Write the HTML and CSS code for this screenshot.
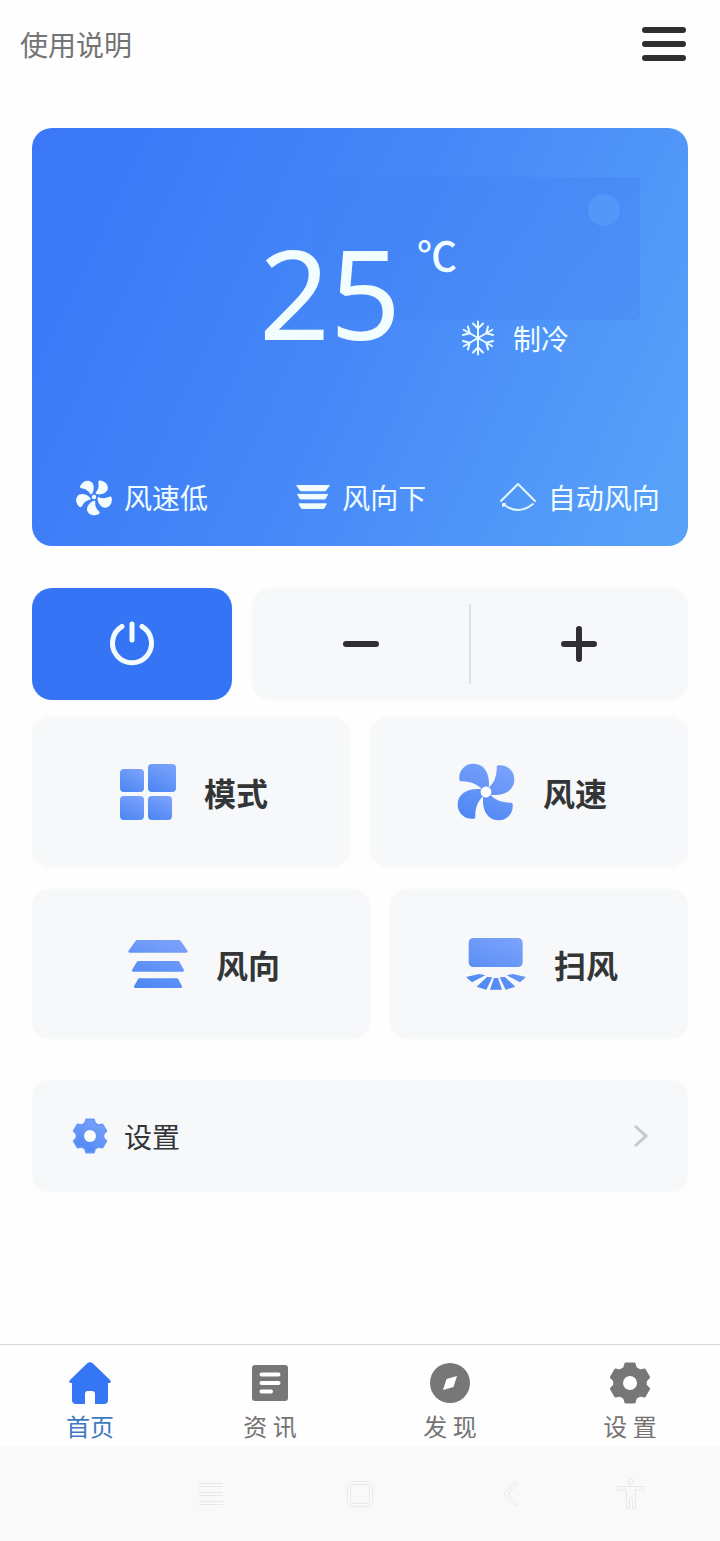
FILE: index.html
```html
<!DOCTYPE html>
<html lang="zh-CN">
<head>
<meta charset="utf-8">
<meta name="viewport" content="width=device-width, initial-scale=1">
<title>空调遥控器</title>
<link rel="stylesheet" href="styles.css">
</head>
<body>
<svg class="defs" width="0" height="0" aria-hidden="true">
  <defs>
    <linearGradient id="blue" x1="0.8" y1="0" x2="0.3" y2="1">
      <stop offset="0" stop-color="#7ba2fb"/>
      <stop offset="1" stop-color="#4f88f4"/>
    </linearGradient>
    <path id="gear" d="M-6-14.800-4.500-19.500 4.500-19.500 6-14.800 9.900-12.600 14.600-13.600 19.100-5.800 15.800-2.200 15.800 2.200 19.100 5.800 14.600 13.600 9.900 12.600 6 14.800 4.500 19.500-4.500 19.500-6 14.800-9.900 12.600-14.600 13.600-19.100 5.800-15.800 2.200-15.800-2.200-19.100-5.800-14.600-13.600-9.900-12.600Z" stroke-width="2" stroke-linejoin="round"/>
    <path id="blade5" d="M-1 12C-13 17-23 28-22 42C-20 50-14 56-4 58C6 58 16 56 18 50C18 46 14 44 11 40C5 33 3 24 4 13Z"/>
    <path id="arm" d="M0 0V-16.500M-5-14.500 0-9.500 5-14.500"/>
  </defs>
</svg>

<header class="topbar">
  <a class="topbar-link" href="#help">使用说明</a>
  <button class="icon-button" type="button" aria-label="菜单">
    <svg width="44" height="34" viewBox="0 0 44 34"><path d="M3 3H41M3 17H41M3 31H41" stroke="#2e2d2f" stroke-width="6" stroke-linecap="round"/></svg>
  </button>
</header>

<main class="content">
  <section class="status">
    <div class="unit-art"><span class="unit-lamp"></span></div>
    <div class="reading">
      <div class="temperature"><span class="degrees">25</span><span class="unit">℃</span></div>
      <div class="mode">
        <svg width="34" height="36" viewBox="-17 -18 34 36" fill="none" stroke="#e9fbff" stroke-width="2" stroke-linecap="round">
          <use href="#arm"/><use href="#arm" transform="rotate(60)"/><use href="#arm" transform="rotate(120)"/><use href="#arm" transform="rotate(180)"/><use href="#arm" transform="rotate(240)"/><use href="#arm" transform="rotate(300)"/>
        </svg>
        <span>制冷</span>
      </div>
    </div>
    <ul class="facts">
      <li>
        <svg width="36" height="38" viewBox="-57 -60 114 120" fill="#f3fdff">
          <use href="#blade5"/><use href="#blade5" transform="rotate(72)"/><use href="#blade5" transform="rotate(144)"/><use href="#blade5" transform="rotate(216)"/><use href="#blade5" transform="rotate(288)"/><circle r="7"/>
        </svg>
        <span>风速低</span>
      </li>
      <li>
        <svg width="34" height="26" viewBox="0 0 104 78" fill="#f3fdff" stroke="#f3fdff" stroke-width="3" stroke-linejoin="round"><path d="M2 4H102L90 20H14ZM5 31H97L89 45H13ZM9 60H93L85 74H17Z"/></svg>
        <span>风向下</span>
      </li>
      <li>
        <svg width="36" height="30" viewBox="0 0 36 30" fill="none" stroke="#e2f8ff" stroke-width="2" stroke-linecap="round" stroke-linejoin="round"><path d="M1 19 18 2 35 19"/><path d="M3 22Q18 34 33 22M3 24V22H5"/></svg>
        <span>自动风向</span>
      </li>
    </ul>
  </section>

  <div class="row row-power">
    <button class="power" type="button" aria-label="电源">
      <svg width="46" height="46" viewBox="0 0 46 46" fill="none" stroke="#f3fcff" stroke-width="5" stroke-linecap="round"><path d="M13 5.500A19.500 19.500 0 1 0 33 5.500M23 3V19"/></svg>
    </button>
    <div class="stepper">
      <button type="button" aria-label="降低温度"><svg width="36" height="36" viewBox="0 0 36 36"><path d="M3 18H33" stroke="#2f2f31" stroke-width="6" stroke-linecap="round"/></svg></button>
      <button type="button" aria-label="升高温度"><svg width="36" height="36" viewBox="0 0 36 36"><path d="M3 18H33M18 3V33" stroke="#2f2f31" stroke-width="6" stroke-linecap="round"/></svg></button>
    </div>
  </div>

  <div class="row row-even">
    <button class="tile" type="button">
      <svg width="56" height="56" viewBox="0 0 56 56" fill="url(#blue)"><rect x="0" y="5" width="24" height="23" rx="4"/><rect x="28" y="0" width="28" height="28" rx="4"/><rect x="0" y="32" width="24" height="24" rx="4"/><rect x="28" y="32" width="24" height="24" rx="4"/></svg>
      <span>模式</span>
    </button>
    <button class="tile" type="button">
      <svg width="58" height="58" viewBox="-86 -86 172 172" fill="url(#blue)">
        <path d="M-14-10C-30-26-48-32-76-32Q-79-33-79-37C-82-62-64-84-38-84C-2-84 13-50 8-12L0 0ZM10-14C26-30 32-48 32-76Q33-79 37-79C62-82 84-64 84-38C84-2 50 13 12 8L0 0ZM14 10C30 26 48 32 76 32Q79 33 79 37C82 62 64 84 38 84C2 84-13 50-8 12L0 0ZM-10 14C-26 30-32 48-32 76Q-33 79-37 79C-62 82-84 64-84 38C-84 2-50-13-12-8L0 0Z"/><circle r="16" fill="#fdffff"/>
      </svg>
      <span>风速</span>
    </button>
  </div>

  <div class="row row-wide">
    <button class="tile" type="button">
      <svg width="60" height="50" viewBox="0 0 180 150" fill="url(#blue)"><path d="M28 3H152Q156 3 159 7L179 36Q180 41 175 41H5Q0 41 1 36L22 7Q24 3 28 3ZM32 66H149Q153 66 155 70L168 93Q169 98 164 98H16Q11 98 12 93L26 70Q28 66 32 66ZM34 118H146Q150 118 152 122L162 142Q163 147 158 147H22Q17 147 18 142L29 122Q31 118 34 118Z"/></svg>
      <span>风向</span>
    </button>
    <button class="tile" type="button">
      <svg width="60" height="52" viewBox="0 0 180 156" fill="url(#blue)"><path d="M24 0H154Q170 0 170 16V71Q170 87 154 87H24Q8 87 8 71V16Q8 0 24 0ZM0 117 40 108 58 112 18 133ZM32 146 63 117 79 118 61 155ZM72 155 84 120H96L108 155ZM180 117 140 108 122 112 162 133ZM148 146 117 117 101 118 119 155Z"/></svg>
      <span>扫风</span>
    </button>
  </div>

  <a class="settings" href="#settings">
    <svg width="36" height="38" viewBox="-21 -21 42 42"><use href="#gear" fill="url(#blue)" stroke="#6797f7"/><circle r="7" fill="#fbfdff"/></svg>
    <span>设置</span>
    <svg class="chevron" width="14" height="24" viewBox="0 0 14 24" fill="none" stroke="#c6c8ca" stroke-width="3"><path d="M1 2 12 12 1 22"/></svg>
  </a>
</main>

<nav class="tabs">
  <a class="tab tab-active" href="#home">
    <svg width="42" height="42" viewBox="0 0 42 42" fill="#3576f5"><path d="M18 1.500Q21-1 24 1.500L41 18Q43 21 40 21H39V38Q39 42 35 42H26V32Q26 29 23 29H19Q16 29 16 32V42H7Q3 42 3 38V21H2Q-1 21 1 18Z"/></svg>
    <span>首页</span>
  </a>
  <a class="tab" href="#news">
    <svg width="42" height="42" viewBox="0 0 42 42"><rect x="3" y="3" width="36" height="36" rx="3" fill="#777"/><path d="M12.500 12.500H29.500M12.500 21H29.500M12.500 29.500H22" stroke="#fff" stroke-width="4" stroke-linecap="round"/></svg>
    <span>资 讯</span>
  </a>
  <a class="tab" href="#discover">
    <svg width="42" height="42" viewBox="0 0 42 42"><circle cx="21" cy="21" r="20" fill="#777"/><path d="M28 14 24.500 25 14 28 17.500 17Z" fill="#fff"/></svg>
    <span>发 现</span>
  </a>
  <a class="tab" href="#me">
    <svg width="42" height="42" viewBox="-21 -21 42 42"><use href="#gear" fill="#777" stroke="#777"/><circle r="7" fill="#fff"/></svg>
    <span>设 置</span>
  </a>
</nav>

<footer class="system">
  <button class="icon-button" type="button" aria-label="最近任务"><svg width="24" height="26" viewBox="0 0 24 26"><path d="M0 2.500H24M0 5.500H24M0 11.500H24M0 14.500H24M0 20.500H24M0 23.500H24"/></svg></button>
  <button class="icon-button" type="button" aria-label="主屏幕"><svg width="26" height="26" viewBox="0 0 26 26"><rect x="0.500" y="0.500" width="25" height="25" rx="6"/><rect x="3.500" y="3.500" width="19" height="19" rx="4"/></svg></button>
  <button class="icon-button" type="button" aria-label="返回"><svg width="16" height="26" viewBox="0 0 16 26"><path d="M12 1 1 13 12 25 14 23 5 13 14 3Z"/></svg></button>
  <button class="icon-button" type="button" aria-label="无障碍"><svg width="28" height="32" viewBox="0 0 28 32"><circle cx="14" cy="4" r="2.500"/><path d="M1 8.500H27V12H18.500V30H15.500V20H12.500V30H9.500V12H1Z"/></svg></button>
</footer>
</body>
</html>
```

FILE: styles.css
```css
* {
  box-sizing: border-box;
}

body {
  margin: 0;
  min-height: 100vh;
  display: flex;
  flex-direction: column;
  background: #fefefe;
  color: #343537;
  font-family: "Noto Sans CJK SC", sans-serif;
  font-size: 28px;
  line-height: 40px;
}

a {
  color: inherit;
  text-decoration: none;
}

button {
  margin: 0;
  padding: 0;
  border: 0;
  background: none;
  color: inherit;
  font: inherit;
  cursor: pointer;
}

svg {
  display: block;
  flex: none;
}

.defs {
  position: absolute;
}

.topbar {
  display: flex;
  align-items: center;
  justify-content: space-between;
  padding: 24px 34px 24px 20px;
}

.topbar-link {
  color: #747474;
}

.content {
  flex: 1;
  padding: 40px 32px;
}

.status {
  position: relative;
  display: flex;
  flex-direction: column;
  justify-content: space-between;
  min-height: 418px;
  padding: 88px 0 29px;
  border-radius: 20px;
  background: linear-gradient(115deg, #3a78f7 8%, #4688f8 50%, #58a1f9 95%);
  color: #f1fdff;
}

.unit-art {
  position: absolute;
  top: 49px;
  right: 48px;
  width: 50%;
  height: 143px;
  border-radius: 4px;
  background: linear-gradient(90deg, rgba(60, 120, 240, 0.1), rgba(60, 120, 240, 0.3));
}

.unit-lamp {
  position: absolute;
  top: 17px;
  right: 20px;
  width: 32px;
  height: 32px;
  border-radius: 50%;
  background: #5397f9;
}

.reading {
  position: relative;
  display: grid;
  grid-template-columns: 1fr auto 1fr;
}

.temperature {
  grid-column: 2;
  display: flex;
  gap: 16px;
  padding-right: 4px;
}

.degrees {
  font-family: "Noto Sans", sans-serif;
  font-size: 124px;
  line-height: 152px;
}

.unit {
  padding-top: 18px;
  font-size: 40px;
  font-weight: 500;
}

.mode {
  display: flex;
  align-items: center;
  align-self: end;
  gap: 18px;
  padding-bottom: 10px;
}

.facts {
  position: relative;
  display: grid;
  grid-template-columns: 220fr 203fr 188fr;
  margin: 0;
  padding: 0 0 0 44px;
  list-style: none;
}

.facts li {
  display: flex;
  align-items: center;
  gap: 12px;
  white-space: nowrap;
}

.row {
  display: grid;
  gap: 20px;
}

.row-power {
  grid-template-columns: 200fr 436fr;
  margin-top: 42px;
}

.row-even {
  grid-template-columns: 1fr 1fr;
  margin-top: 17px;
}

.row-wide {
  grid-template-columns: 338fr 298fr;
  margin-top: 22px;
}

.power,
.stepper {
  height: 112px;
  border-radius: 20px;
}

.power {
  display: grid;
  place-items: center;
  background: #3575f5;
}

.stepper,
.tile,
.settings {
  background: #f6f8fa;
  box-shadow: 0 0 4px #f8fafb;
}

.stepper {
  display: grid;
  grid-template-columns: 1fr 1fr;
  padding: 16px 2px 16px 0;
}

.stepper button {
  display: grid;
  place-items: center;
}

.stepper button + button {
  border-left: 2px solid #dedfe1;
}

.tile {
  display: flex;
  align-items: center;
  justify-content: center;
  gap: 28px;
  height: 150px;
  padding-left: 6px;
  border-radius: 18px;
  font-size: 32px;
  font-weight: 700;
}

.settings {
  display: flex;
  align-items: center;
  gap: 16px;
  height: 112px;
  margin-top: 41px;
  padding: 0 40px;
  border-radius: 18px;
}

.chevron {
  margin-left: auto;
}

.tabs {
  display: grid;
  grid-template-columns: repeat(4, 1fr);
  padding: 17px 0 2px;
  border-top: 1px solid #d6d6d6;
}

.tab {
  display: flex;
  flex-direction: column;
  align-items: center;
  gap: 4px;
  color: #747474;
  font-size: 24px;
  line-height: 36px;
}

.tab-active {
  color: #3e78bf;
}

.system {
  display: grid;
  grid-template-columns: 150fr 148fr 154fr 86fr;
  place-items: center;
  height: 95px;
  padding: 0 46px 0 136px;
  background: #f9f9f9;
}

.system svg {
  fill: none;
  stroke: #e8e8e8;
}
```
